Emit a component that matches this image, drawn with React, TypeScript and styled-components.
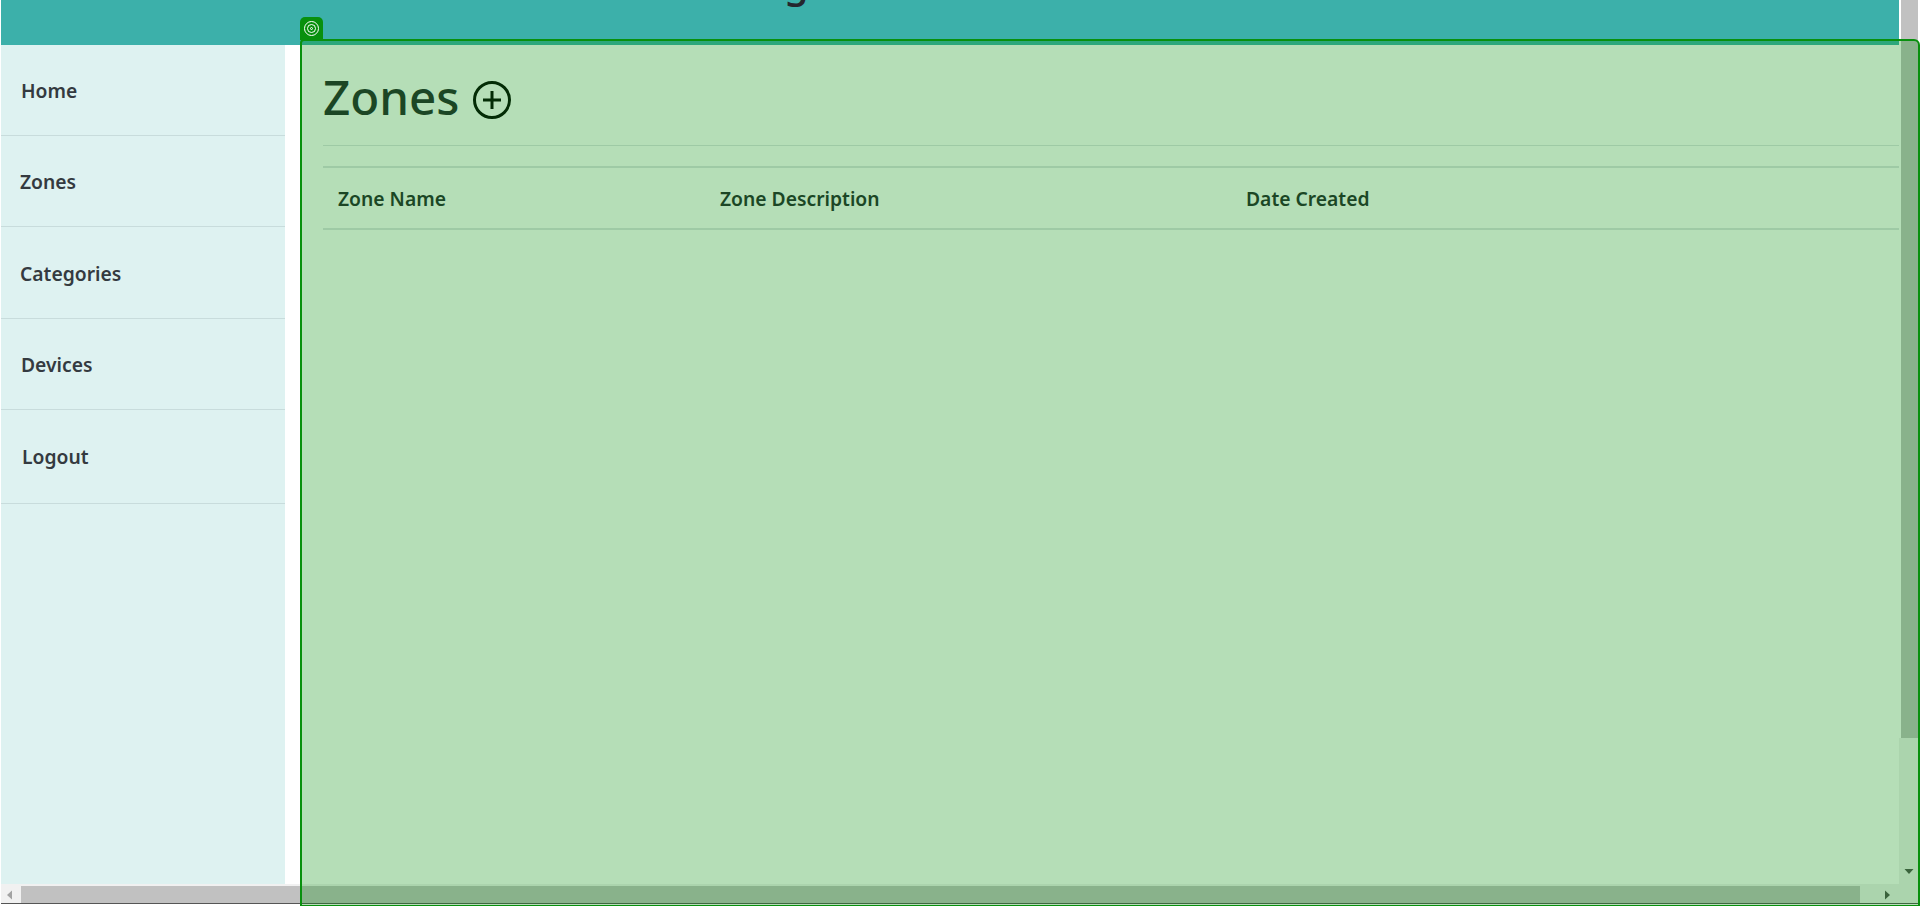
import React from "react";
import styled, { createGlobalStyle } from "styled-components";

const Global = createGlobalStyle`
  html, body { margin: 0; padding: 0; height: 100%; overflow: hidden; background: #fff; }
  #root { height: 100%; }
`;

const Page = styled.div`
  position: relative;
  width: 1920px;
  height: 906px;
  display: grid;
  grid-template-columns: 1899px 19px 2px;
  grid-template-rows: 884px 19px 3px;
  font-family: "Noto Sans", "Open Sans", sans-serif;
  background: #fff;
  overflow: hidden;
`;

const Viewport = styled.div`
  grid-column: 1;
  grid-row: 1;
  display: flex;
  flex-direction: column;
  padding-left: 1px;
  min-width: 0;
`;

const Header = styled.header`
  height: 45px;
  flex: none;
  background: #3cb0aa;
  overflow: hidden;
  text-align: center;
`;

const Title = styled.h1`
  margin: -45px 0 0 -50px;
  font-size: 40px;
  line-height: 54px;
  font-weight: 500;
  color: #25262e;
`;

const Body = styled.div`
  flex: 1;
  display: flex;
  min-height: 0;
`;

const Sidebar = styled.nav`
  width: 284px;
  flex: none;
  background: #def2f1;
`;

const NavItem = styled.a<{ $height: number; $indent?: number; $drop?: number }>`
  display: flex;
  align-items: center;
  box-sizing: border-box;
  height: ${(p) => p.$height}px;
  padding-left: ${(p) => p.$indent ?? 19}px;
  padding-top: ${(p) => p.$drop ?? 0}px;
  border-bottom: 1px solid #c8dcdc;
  color: #343a40;
  font-size: 19.3px;
  font-weight: 600;
`;

const Main = styled.main`
  flex: 1;
  min-width: 0;
  padding: 0 0 0 38px;
`;

const Heading = styled.div`
  height: 101px;
  display: flex;
  align-items: center;
  gap: 13px;
  padding-top: 4px;
  box-sizing: border-box;
  border-bottom: 1px solid #dee2e6;
  color: #25262e;
`;

const HeadingText = styled.h2`
  margin: 0;
  font-size: 47.5px;
  line-height: 60px;
  font-weight: 500;
`;

const AddIcon = styled.svg`
  margin-top: 5px;
  flex: none;
`;

const Table = styled.div`
  margin-top: 20px;
  border-top: 2px solid #dee2e6;
  border-bottom: 2px solid #dee2e6;
  height: 60px;
  display: grid;
  grid-template-columns: 382px 526px 1fr;
  align-items: center;
  color: #25262e;
  font-size: 19.3px;
  font-weight: 600;
`;

const Cell = styled.div`
  padding-left: 15px;
`;

const VTrack = styled.div`
  grid-column: 2;
  grid-row: 1 / 3;
  display: flex;
  flex-direction: column;
`;

const VThumb = styled.div`
  margin-left: 2px;
  height: 738px;
  background: #c1c1c1;
`;

const VRest = styled.div`
  flex: 1;
  background: #f1f1f1;
  display: flex;
  align-items: flex-end;
  justify-content: center;
  padding-bottom: 27px;
`;

const HTrack = styled.div`
  grid-column: 1;
  grid-row: 2;
  margin-left: 1px;
  background: #f1f1f1;
  display: flex;
  align-items: flex-start;
  padding-top: 2px;
  box-sizing: border-box;
`;

const HThumb = styled.div`
  margin-left: 2px;
  height: 17px;
  width: 1839px;
  background: #c1c1c1;
`;

const HSlot = styled.div`
  width: 18px;
  height: 17px;
  display: flex;
  align-items: center;
  justify-content: center;
  flex: none;
`;

const EndSlot = styled(HSlot)`
  flex: 1;
  justify-content: flex-end;
  padding-right: 7px;
`;

const BottomRule = styled.div`
  grid-column: 1 / 4;
  grid-row: 3;
  margin-left: 1px;
  border-top: 1px solid #555;
`;

const Highlight = styled.div`
  position: absolute;
  left: 300px;
  top: 39px;
  width: 1620px;
  height: 868px;
  box-sizing: border-box;
  border: 2px solid #08900d;
  border-radius: 4px 6px 0 0;
  background: rgba(10, 147, 15, 0.3);
`;

const Tag = styled.div`
  position: absolute;
  left: -2px;
  top: -24px;
  width: 23px;
  height: 23px;
  border-radius: 5px 5px 0 0;
  background: #08900d;
  display: flex;
  align-items: center;
  justify-content: center;
`;

const Tri = ({ d, fill }: { d: string; fill: string }) => (
  <svg width="10" height="10" viewBox="0 0 10 10"><path d={d} fill={fill} /></svg>
);

export default function App() {
  return (
    <Page>
      <Global />
      <Viewport>
        <Header><Title>Tag Monitor Admin</Title></Header>
        <Body>
          <Sidebar>
            <NavItem $height={91} $indent={20}>Home</NavItem>
            <NavItem $height={91}>Zones</NavItem>
            <NavItem $height={92} $drop={2}>Categories</NavItem>
            <NavItem $height={91} $indent={20}>Devices</NavItem>
            <NavItem $height={94} $indent={21}>Logout</NavItem>
          </Sidebar>
          <Main>
            <Heading>
              <HeadingText>Zones</HeadingText>
              <AddIcon width="40" height="40" viewBox="0 0 40 40" fill="none" stroke="#000" strokeWidth="3">
                <circle cx="20" cy="20" r="17.5" />
                <path d="M20 11v18M11 20h18" />
              </AddIcon>
            </Heading>
            <Table>
              <Cell>Zone Name</Cell>
              <Cell>Zone Description</Cell>
              <Cell>Date Created</Cell>
            </Table>
          </Main>
        </Body>
      </Viewport>
      <VTrack>
        <VThumb />
        <VRest><Tri d="M.5 3h9L5 8z" fill="#505050" /></VRest>
      </VTrack>
      <HTrack>
        <HSlot><Tri d="M7 .5v9L2 5z" fill="#a3a3a3" /></HSlot>
        <HThumb />
        <EndSlot><Tri d="M3 .5v9L8 5z" fill="#505050" /></EndSlot>
      </HTrack>
      <BottomRule />
      <Highlight>
        <Tag>
          <svg width="17" height="17" viewBox="0 0 17 17" fill="none" stroke="#fff">
            <circle cx="8.5" cy="8.5" r="7" />
            <circle cx="8.5" cy="8.5" r="4" />
            <circle cx="8.5" cy="8.5" r="1" />
          </svg>
        </Tag>
      </Highlight>
    </Page>
  );
}
